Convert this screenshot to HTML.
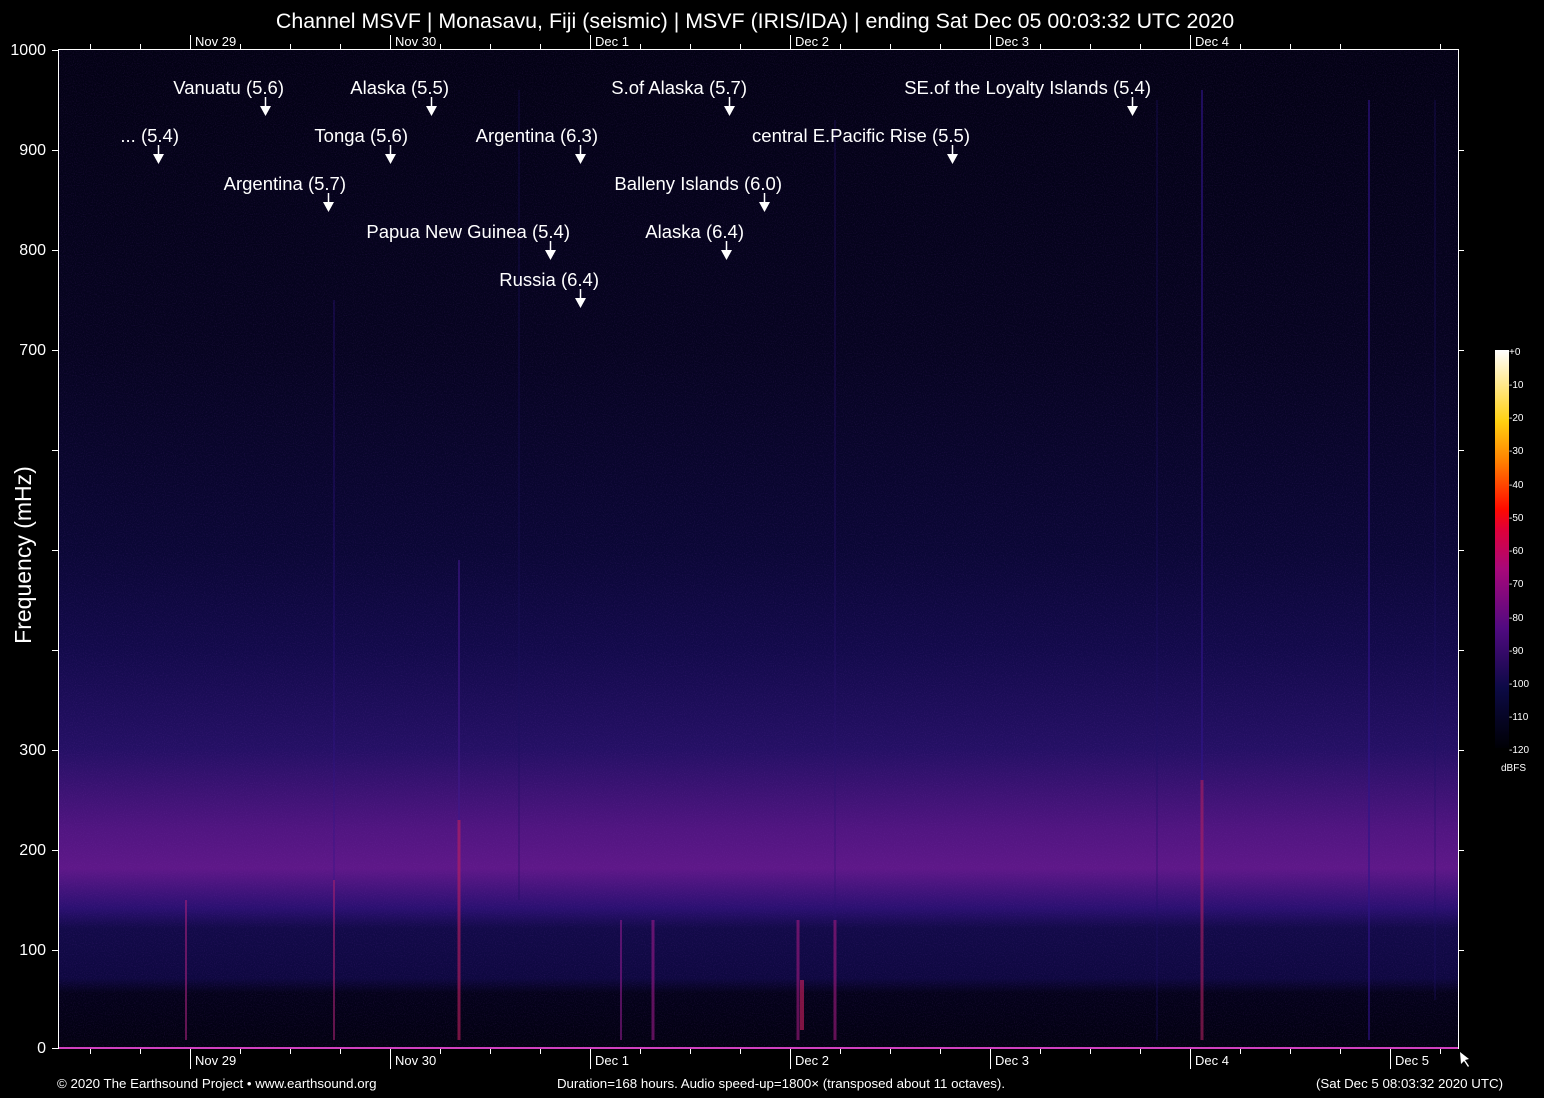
<!DOCTYPE html>
<html><head><meta charset="utf-8"><style>
html,body{margin:0;padding:0;background:#000;}
svg{display:block;font-family:"Liberation Sans",Arial,sans-serif;}
</style></head><body>
<svg width="1544" height="1098" viewBox="0 0 1544 1098" xmlns="http://www.w3.org/2000/svg">
<defs>
<linearGradient id="bg" x1="0" y1="0" x2="0" y2="1">
<stop offset="0" stop-color="#030214"/>
<stop offset="0.3" stop-color="#060420"/>
<stop offset="0.5" stop-color="#0a0735"/>
<stop offset="0.6" stop-color="#120a4a"/>
<stop offset="0.7" stop-color="#241064"/>
<stop offset="0.78" stop-color="#501580"/>
<stop offset="0.82" stop-color="#5e1888"/>
<stop offset="0.86" stop-color="#2a1070"/>
<stop offset="0.88" stop-color="#120a48"/>
<stop offset="0.93" stop-color="#0e0840"/>
<stop offset="0.945" stop-color="#04021a"/>
<stop offset="1" stop-color="#020110"/>
</linearGradient>
<linearGradient id="cb" x1="0" y1="1" x2="0" y2="0">
<stop offset="0" stop-color="#000005"/>
<stop offset="0.15" stop-color="#0c0a45"/>
<stop offset="0.3" stop-color="#500a80"/>
<stop offset="0.45" stop-color="#a8087a"/>
<stop offset="0.55" stop-color="#e00038"/>
<stop offset="0.6" stop-color="#ff0a00"/>
<stop offset="0.72" stop-color="#ff8000"/>
<stop offset="0.82" stop-color="#ffd010"/>
<stop offset="1" stop-color="#ffffff"/>
</linearGradient>
<filter id="n" x="0" y="0" width="100%" height="100%">
<feTurbulence type="fractalNoise" baseFrequency="0.9" numOctaves="1" seed="3"/>
<feColorMatrix values="0 0 0 0 0.25  0 0 0 0 0.05  0 0 0 0 0.55  0 0 0 1.2 -0.55"/>
</filter>
</defs>
<rect x="58" y="50" width="1400" height="998" fill="url(#bg)"/>
<rect x="58" y="50" width="1400" height="998" filter="url(#n)" opacity="0.3"/>
<g stroke-width="2" opacity="0.6">
<line x1="186" y1="900" x2="186" y2="1040" stroke="#a0207a"/>
<line x1="334" y1="300" x2="334" y2="1040" stroke="#30148a" stroke-width="1"/>
<line x1="334" y1="880" x2="334" y2="1040" stroke="#a02070"/>
<line x1="459" y1="560" x2="459" y2="1040" stroke="#40188a"/>
<line x1="459" y1="820" x2="459" y2="1040" stroke="#c02060" stroke-width="3"/>
<line x1="519" y1="90" x2="519" y2="900" stroke="#1a1060" stroke-width="1"/>
<line x1="621" y1="920" x2="621" y2="1040" stroke="#8a1a8a"/>
<line x1="653" y1="920" x2="653" y2="1040" stroke="#9a1a8a" stroke-width="3"/>
<line x1="798" y1="920" x2="798" y2="1040" stroke="#a01a80" stroke-width="3"/>
<line x1="802" y1="980" x2="802" y2="1030" stroke="#d02060" stroke-width="4"/>
<line x1="835" y1="120" x2="835" y2="1040" stroke="#2a1270" stroke-width="1"/>
<line x1="835" y1="920" x2="835" y2="1040" stroke="#a01a80" stroke-width="3"/>
<line x1="1157" y1="100" x2="1157" y2="1040" stroke="#1e1068" stroke-width="1"/>
<line x1="1202" y1="90" x2="1202" y2="1040" stroke="#30148a"/>
<line x1="1202" y1="780" x2="1202" y2="1040" stroke="#b02060" stroke-width="3"/>
<line x1="1369" y1="100" x2="1369" y2="1040" stroke="#30148a"/>
<line x1="1435" y1="100" x2="1435" y2="1000" stroke="#1e1068" stroke-width="1"/>
</g>
<line x1="58" y1="1048" x2="1458" y2="1048" stroke="#d040c0" stroke-width="2"/>
<g stroke="#fff" stroke-width="1" fill="none">
<line x1="58.5" y1="50" x2="58.5" y2="1049"/>
<line x1="1458.5" y1="50" x2="1458.5" y2="1049"/>
<line x1="58" y1="49.5" x2="1459" y2="49.5"/>
<path d="M52 50.5h6M52 150.5h6M52 250.5h6M52 350.5h6M52 450.5h6M52 550.5h6M52 650.5h6M52 750.5h6M52 850.5h6M52 950.5h6M52 1048.5h6"/>
<path d="M1458 150.5h6M1458 250.5h6M1458 350.5h6M1458 450.5h6M1458 550.5h6M1458 650.5h6M1458 750.5h6M1458 850.5h6M1458 950.5h6"/>
<path d="M90.5 1049v5M140.5 1049v5M240.5 1049v5M290.5 1049v5M340.5 1049v5M440.5 1049v5M490.5 1049v5M540.5 1049v5M640.5 1049v5M690.5 1049v5M740.5 1049v5M840.5 1049v5M890.5 1049v5M940.5 1049v5M1040.5 1049v5M1090.5 1049v5M1140.5 1049v5M1240.5 1049v5M1290.5 1049v5M1340.5 1049v5M1440.5 1049v5"/>
<path d="M190.5 1049v20M390.5 1049v20M590.5 1049v20M790.5 1049v20M990.5 1049v20M1190.5 1049v20M1390.5 1049v20"/>
<path d="M90.5 44v5M140.5 44v5M240.5 44v5M290.5 44v5M340.5 44v5M440.5 44v5M490.5 44v5M540.5 44v5M640.5 44v5M690.5 44v5M740.5 44v5M840.5 44v5M890.5 44v5M940.5 44v5M1040.5 44v5M1090.5 44v5M1140.5 44v5M1240.5 44v5M1290.5 44v5M1340.5 44v5M1440.5 44v5"/>
<path d="M190.5 35v14M390.5 35v14M590.5 35v14M790.5 35v14M990.5 35v14M1190.5 35v14"/>
</g>
<g fill="#fff" font-size="16" text-anchor="end">
<text x="46" y="55">1000</text><text x="46" y="155">900</text><text x="46" y="255">800</text><text x="46" y="355">700</text>
<text x="46" y="755">300</text><text x="46" y="855">200</text><text x="46" y="955">100</text><text x="46" y="1053">0</text>
</g>
<text transform="translate(31,555) rotate(-90)" fill="#fff" font-size="23" text-anchor="middle">Frequency (mHz)</text>
<g fill="#fff" font-size="13">
<text x="195" y="1065">Nov 29</text><text x="395" y="1065">Nov 30</text><text x="595" y="1065">Dec  1</text><text x="795" y="1065">Dec  2</text><text x="995" y="1065">Dec  3</text><text x="1195" y="1065">Dec  4</text><text x="1395" y="1065">Dec  5</text>
<text x="195" y="46">Nov 29</text><text x="395" y="46">Nov 30</text><text x="595" y="46">Dec  1</text><text x="795" y="46">Dec  2</text><text x="995" y="46">Dec  3</text><text x="1195" y="46">Dec  4</text>
</g>
<text x="755" y="28" fill="#fff" font-size="21.4" text-anchor="middle">Channel MSVF | Monasavu, Fiji (seismic) | MSVF (IRIS/IDA) | ending Sat Dec 05 00:03:32 UTC 2020</text>
<g fill="#fff" font-size="13.3">
<text x="57" y="1088">© 2020 The Earthsound Project • www.earthsound.org</text>
<text x="781" y="1088" text-anchor="middle">Duration=168 hours. Audio speed-up=1800× (transposed about 11 octaves).</text>
<text x="1503" y="1088" text-anchor="end">(Sat Dec  5 08:03:32 2020 UTC)</text>
</g>
<path d="M1460 1052l1 12 3-3 4 6 1-1-4-6 4-1z" fill="#fff"/>
<g fill="#fff" font-size="18.5" text-anchor="end">
<text x="284" y="94">Vanuatu (5.6)</text>
<text x="449" y="94">Alaska (5.5)</text>
<text x="747" y="94">S.of Alaska (5.7)</text>
<text x="1151" y="94">SE.of the Loyalty Islands (5.4)</text>
<text x="179" y="142">... (5.4)</text>
<text x="408" y="142">Tonga (5.6)</text>
<text x="598" y="142">Argentina (6.3)</text>
<text x="970" y="142">central E.Pacific Rise (5.5)</text>
<text x="346" y="190">Argentina (5.7)</text>
<text x="782" y="190">Balleny Islands (6.0)</text>
<text x="570" y="238">Papua New Guinea (5.4)</text>
<text x="744" y="238">Alaska (6.4)</text>
<text x="599" y="286">Russia (6.4)</text>
</g>
<g fill="#fff" stroke="#fff">
<path d="M265.5 97v9M431.5 97v9M729.5 97v9M1132.5 97v9M158.5 145v9M390.5 145v9M580.5 145v9M952.5 145v9M328.5 193v9M764.5 193v9M550.5 241v9M726.5 241v9M580.5 289v9" stroke-width="1.5" fill="none"/>
<path d="M260 106h11l-5.5 10zM426 106h11l-5.5 10zM724 106h11l-5.5 10zM1127 106h11l-5.5 10zM153 154h11l-5.5 10zM385 154h11l-5.5 10zM575 154h11l-5.5 10zM947 154h11l-5.5 10zM323 202h11l-5.5 10zM759 202h11l-5.5 10zM545 250h11l-5.5 10zM721 250h11l-5.5 10zM575 298h11l-5.5 10z" stroke="none"/>
</g>
<rect x="1495" y="350" width="14" height="398" fill="url(#cb)"/>
<g fill="#fff" font-size="10">
<text x="1509" y="355">+0</text><text x="1509" y="388">-10</text><text x="1509" y="421">-20</text><text x="1509" y="454">-30</text><text x="1509" y="488">-40</text><text x="1509" y="521">-50</text><text x="1509" y="554">-60</text><text x="1509" y="587">-70</text><text x="1509" y="621">-80</text><text x="1509" y="654">-90</text><text x="1509" y="687">-100</text><text x="1509" y="720">-110</text><text x="1509" y="753">-120</text>
<text x="1501" y="771">dBFS</text>
</g>
</svg>
</body></html>
